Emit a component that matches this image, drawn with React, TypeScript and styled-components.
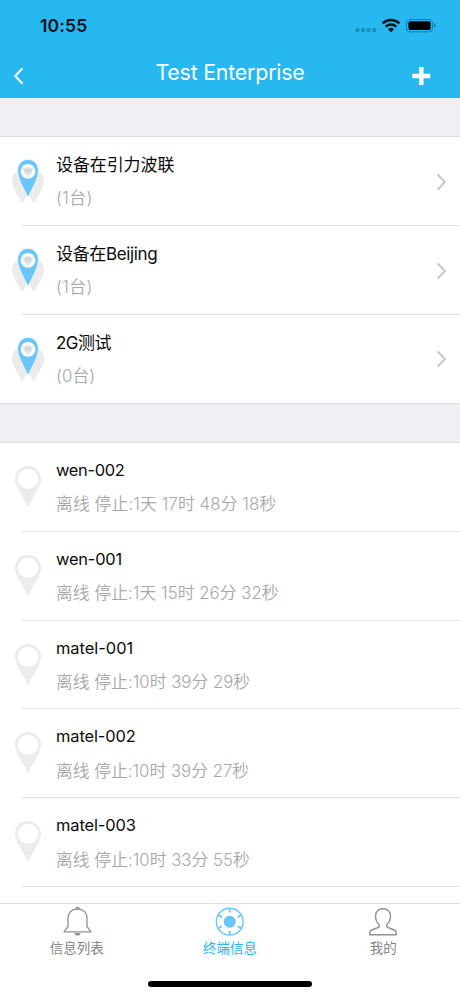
import React from "react";
import styled, { createGlobalStyle } from "styled-components";

const GlobalStyle = createGlobalStyle`
  * { box-sizing: border-box; }
  body {
    margin: 0;
    background: #fff;
    font-family: Inter, "Noto Sans CJK SC", sans-serif;
  }
`;

const Screen = styled.main`
  width: 460px;
  height: 996px;
  display: flex;
  flex-direction: column;
  overflow: hidden;
  background: #fff;
`;

const Header = styled.header`
  height: 98px;
  flex: none;
  background: #27b8f0;
`;

const StatusBar = styled.div`
  height: 50px;
  display: flex;
  align-items: center;
  justify-content: space-between;
  padding: 1px 24px 0 40px;
`;

const Clock = styled.time`
  font-size: 17.5px;
  font-weight: 600;
  letter-spacing: 0.2px;
  color: #03131b;
`;

const NavBar = styled.div`
  height: 48px;
  display: grid;
  grid-template-columns: 80px 1fr 80px;
  align-items: center;
`;

const Title = styled.h1`
  margin: 0;
  padding-bottom: 4px;
  text-align: center;
  font-size: 21.4px;
  line-height: 28px;
  font-weight: 400;
  letter-spacing: -0.22px;
  color: #fff;
`;

const NavButton = styled.button<{ $end?: boolean }>`
  display: flex;
  justify-content: ${(p) => (p.$end ? "flex-end" : "flex-start")};
  padding: ${(p) => (p.$end ? "4px 29px 0 0" : "3px 0 0 13px")};
  border: 0;
  background: none;
`;

const SectionGap = styled.div`
  height: 39px;
  flex: none;
  background: #efeff4;
`;

const List = styled.ul<{ $fill?: boolean }>`
  margin: -1px 0 0;
  padding: 0;
  list-style: none;
  border-top: 1px solid #dfdfe3;
  ${(p) => (p.$fill ? "flex: 1; min-height: 0; overflow: hidden;" : "border-bottom: 1px solid #dfdfe3;")}
`;

const Row = styled.li<{ $group?: boolean }>`
  height: ${(p) => (p.$group ? 89 : 88.8)}px;
  display: flex;
  position: relative;
  &:last-child {
    height: ${(p) => (p.$group ? 88 : 88.8)}px;
  }
  &:not(:last-child)::after,
  ${List}[data-open] &::after {
    content: "";
    position: absolute;
    left: 22px;
    right: 0;
    bottom: 0;
    height: 1px;
    background: #e2e2e4;
  }
`;

const Marker = styled.div`
  width: 56px;
  flex: none;
  padding: 21px 0 0 11px;
`;

const RowText = styled.div`
  flex: 1;
  padding-top: 15px;
`;

const Name = styled.div<{ $track?: number; $latin?: boolean }>`
  font-size: ${(p) => (p.$latin ? 16.4 : 17)}px;
  line-height: ${(p) => (p.$latin ? 25 : 26)}px;
  letter-spacing: ${(p) => p.$track ?? 0}px;
  color: #0a0a0a;
`;

const Detail = styled.div<{ $track?: number; $latin?: boolean }>`
  margin-top: ${(p) => (p.$latin ? 8.4 : 7)}px;
  font-size: 16.8px;
  line-height: 26px;
  font-weight: 350;
  letter-spacing: ${(p) => p.$track ?? 0}px;
  color: #a8a8a8;
`;

const Disclosure = styled.div`
  display: flex;
  align-items: center;
  padding-right: 13px;
`;

const TabBar = styled.nav`
  height: 93px;
  flex: none;
  border-top: 1px solid #dedfe1;
  background: #fff;
`;

const Tabs = styled.div`
  height: 70px;
  display: grid;
  grid-template-columns: repeat(3, 1fr);
`;

const Tab = styled.button<{ $active?: boolean }>`
  display: flex;
  flex-direction: column;
  align-items: center;
  padding: 2px 0 0;
  border: 0;
  background: none;
  font-family: inherit;
  font-size: 13.5px;
  line-height: 20px;
  color: ${(p) => (p.$active ? "#27b4ec" : "#858585")};
`;

const TabLabel = styled.span`
  margin-top: 1px;
`;

const HomeIndicator = styled.div`
  width: 164px;
  height: 6px;
  margin: 7px auto 0;
  border-radius: 3px;
  background: #000;
`;

const StatusIcons = () => (
  <svg width="82" height="16" viewBox="0 0 82 16">
    <g fill="#1c8cb8">
      <rect x="1.4" y="10" width="4" height="4" rx="1.3" />
      <rect x="7" y="10" width="4" height="4" rx="1.3" />
      <rect x="12.6" y="10" width="4" height="4" rx="1.3" />
      <rect x="18.2" y="10" width="4" height="4" rx="1.3" />
    </g>
    <g fill="none" stroke="#03131b" strokeWidth="2.5">
      <path d="M28.6 5.4a12.2 12.2 0 0 1 16.8 0" />
      <path d="M31.7 8.7a7.8 7.8 0 0 1 10.6 0" />
    </g>
    <path d="M34 11.2a4.4 4.4 0 0 1 6 0L37 14.2z" fill="#03131b" />
    <rect x="52.5" y="1.5" width="26" height="12.4" rx="3.6" fill="none" stroke="#187ca3" />
    <rect x="54.4" y="3.3" width="22.3" height="8.8" rx="2" fill="#000" />
    <path d="M80 5.6c2 .7 2 3.5 0 4.2z" fill="#187ca3" />
  </svg>
);

const BackIcon = () => (
  <svg width="11" height="18" viewBox="0 0 11 18">
    <path d="M9.5 1.2 2.2 9l7.3 7.8" fill="none" stroke="#fff" strokeWidth="2" />
  </svg>
);

const PlusIcon = () => (
  <svg width="20" height="20" viewBox="0 0 20 20">
    <path d="M10.3 1v18M1.3 10h18" stroke="#fff" strokeWidth="4.4" />
  </svg>
);

const GroupPin = () => (
  <svg width="34" height="48" viewBox="0 0 34 48">
    <g fill="#ebebeb">
      <path d="M10 11.5C4 13 1 17.500 1 23c0 6.500 5.500 13.500 10.300 22.500C15.500 37 21 30 21 23c0-6-4-13-11-11.500z" />
      <path d="M24 11.500C30 13 33 17.500 33 23c0 6.500-5.500 13.500-10.300 22.500C18.500 37 13 30 13 23c0-6 4-13 11-11.500z" />
    </g>
    <path d="M17 1.500C10.800 1.500 6.700 6.300 6.700 12.600 6.700 21 12.300 29 17 39.500 21.700 29 27.300 21 27.300 12.600 27.300 6.300 23.200 1.500 17 1.500z" fill="#69c5fa" stroke="#fff" strokeWidth=".6" />
    <circle cx="17" cy="13.300" r="7.400" fill="#fff" />
    <path d="M10.800 10.100 17 13.300l6.200-3.200M17 13.300v6.500" fill="none" stroke="#e8e8e8" strokeWidth="2" />
    <circle cx="17" cy="12.900" r="4" fill="#e0e0e0" />
    <path d="M14 11.500 17 13.300l3-1.800" fill="none" stroke="#c8c8c8" strokeWidth="1" />
  </svg>
);

const DevicePin = () => (
  <svg width="34" height="48" viewBox="0 0 34 48">
    <path
      d="M17 2C9.500 2 4 7.500 4 14.700 4 24 12.500 32 17 43.500 21.500 32 30 24 30 14.700 30 7.500 24.500 2 17 2zM17 4.800a10.200 10 0 1 1 0 20 10.200 10 0 0 1 0-20z"
      fill="#ececec"
      fillRule="evenodd"
    />
  </svg>
);

const Chevron = () => (
  <svg width="11" height="18" viewBox="0 0 11 18">
    <path d="M1.500 1.200 8.800 9l-7.300 7.800" fill="none" stroke="#c7c7cc" strokeWidth="2" />
  </svg>
);

const BellIcon = () => (
  <svg width="30" height="31" viewBox="0 0 30 31">
    <g fill="none" stroke="#929292" strokeWidth="1.300" strokeLinejoin="round">
      <path d="M6 20.500V12.500C6 6.500 9.800 3 15.500 3S25 6.500 25 12.500V20.500L29 25.800H2z" />
      <path d="M13.800 3a1.700 1.500 0 0 1 3.400 0" />
    </g>
    <path d="M12.500 27h6a3 2.600 0 0 1-6 0z" fill="#929292" />
  </svg>
);

const HUB_ANGLES = [0, 60, 120, 180, 240, 300];

const HubIcon = () => (
  <svg width="30" height="31" viewBox="0 0 30 31">
    <g fill="none" stroke="#69c5fa" strokeWidth="1.400">
      <circle cx="14.700" cy="15.700" r="13.400" />
      {HUB_ANGLES.map((a) => (
        <path key={a} d="M14.700 2.300v4.200" strokeWidth="1.800" transform={`rotate(${a} 14.700 15.700)`} />
      ))}
    </g>
    <circle cx="14.700" cy="15.700" r="6" fill="#69c5fa" />
  </svg>
);

const PersonIcon = () => (
  <svg width="30" height="31" viewBox="0 0 30 31">
    <path
      d="M15 2.800C10.500 2.800 7.500 5.600 7.500 10c0 4 1.300 6.600 3.700 8.500v2.300C8.500 22.500 4.500 23.400 2.700 24.600c-1 .700-1.100 2.300-1 4.100h26.600c.1-1.800 0-3.400-1-4.100-1.800-1.200-5.800-2.100-8.500-3.800v-2.300c2.400-1.900 3.700-4.500 3.700-8.500 0-4.400-3-7.200-7.500-7.200z"
      fill="none"
      stroke="#929292"
      strokeWidth="1.400"
      strokeLinejoin="round"
    />
  </svg>
);

interface Entry {
  name: string;
  detail: string;
  nameTrack?: number;
  detailTrack?: number;
}

const groups: Entry[] = [
  { name: "设备在引力波联", detail: "(1台)", nameTrack: -0.1, detailTrack: 0.4 },
  { name: "设备在Beijing", detail: "(1台)", nameTrack: -0.35, detailTrack: 0.4 },
  { name: "2G测试", detail: "(0台)", nameTrack: -0.5, detailTrack: 0.1 },
];

const devices: Entry[] = [
  { name: "wen-002", detail: "离线 停止:1天 17时 48分 18秒", nameTrack: -0.3, detailTrack: 0.11 },
  { name: "wen-001", detail: "离线 停止:1天 15时 26分 32秒", nameTrack: -0.18, detailTrack: 0.04 },
  { name: "matel-001", detail: "离线 停止:10时 39分 29秒", nameTrack: 0, detailTrack: 0.01 },
  { name: "matel-002", detail: "离线 停止:10时 39分 27秒", nameTrack: -0.09, detailTrack: -0.01 },
  { name: "matel-003", detail: "离线 停止:10时 33分 55秒", nameTrack: -0.09, detailTrack: 0.01 },
];

const EntryRow = ({ entry, group }: { entry: Entry; group?: boolean }) => (
  <Row $group={group}>
    <Marker>{group ? <GroupPin /> : <DevicePin />}</Marker>
    <RowText>
      <Name $track={entry.nameTrack} $latin={!group}>
        {entry.name}
      </Name>
      <Detail $track={entry.detailTrack} $latin={!group}>
        {entry.detail}
      </Detail>
    </RowText>
    {group && (
      <Disclosure>
        <Chevron />
      </Disclosure>
    )}
  </Row>
);

export default function App() {
  return (
    <>
      <GlobalStyle />
      <Screen>
        <Header>
          <StatusBar>
            <Clock>10:55</Clock>
            <StatusIcons />
          </StatusBar>
          <NavBar>
            <NavButton aria-label="Back">
              <BackIcon />
            </NavButton>
            <Title>Test Enterprise</Title>
            <NavButton $end aria-label="Add">
              <PlusIcon />
            </NavButton>
          </NavBar>
        </Header>
        <SectionGap />
        <List>
          {groups.map((g) => (
            <EntryRow key={g.name} entry={g} group />
          ))}
        </List>
        <SectionGap />
        <List $fill data-open>
          {devices.map((d) => (
            <EntryRow key={d.name} entry={d} />
          ))}
        </List>
        <TabBar>
          <Tabs>
            <Tab>
              <BellIcon />
              <TabLabel>信息列表</TabLabel>
            </Tab>
            <Tab $active>
              <HubIcon />
              <TabLabel>终端信息</TabLabel>
            </Tab>
            <Tab>
              <PersonIcon />
              <TabLabel>我的</TabLabel>
            </Tab>
          </Tabs>
          <HomeIndicator />
        </TabBar>
      </Screen>
    </>
  );
}
